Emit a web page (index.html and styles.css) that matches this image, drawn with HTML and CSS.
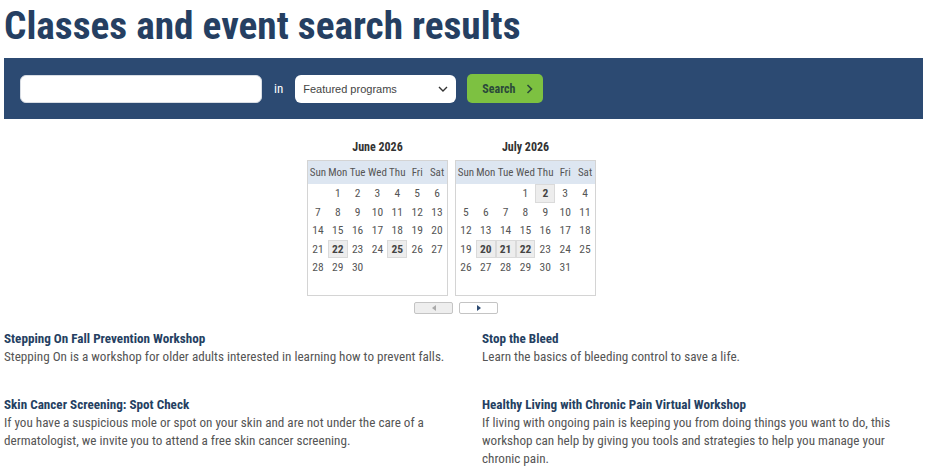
FILE: index.html
```html
<!DOCTYPE html>
<html lang="en">
<head>
  <meta charset="UTF-8">
  <meta name="viewport" content="width=device-width, initial-scale=1.0">
  <title>Classes and event search results</title>
  <link rel="stylesheet" href="styles.css">
</head>
<body>
  <div class="page">
    <h1>Classes and event search results</h1>

    <form class="search-bar" onsubmit="return false;">
      <input class="search-input" type="text" aria-label="Search text">
      <span class="search-in">in</span>
      <div class="select-box">
        <span>Featured programs</span>
        <svg width="10" height="6" viewBox="0 0 10 6"><path d="M1 1l4 4 4-4" fill="none" stroke="#333" stroke-width="1.4"/></svg>
      </div>
      <button class="search-btn" type="submit">Search
        <svg width="7" height="10" viewBox="0 0 7 10"><path d="M1.5 1l4 4-4 4" fill="none" stroke="#2b4a3a" stroke-width="1.6"/></svg>
      </button>
    </form>

    <div class="calendars">
      <div class="months">
        <div class="cal">
          <div class="cal-title">June 2026</div>
          <div class="cal-box">
            <table>
              <thead>
                <tr><th>Sun</th><th>Mon</th><th>Tue</th><th>Wed</th><th>Thu</th><th>Fri</th><th>Sat</th></tr>
              </thead>
              <tbody>
                <tr><td></td><td>1</td><td>2</td><td>3</td><td>4</td><td>5</td><td>6</td></tr>
                <tr><td>7</td><td>8</td><td>9</td><td>10</td><td>11</td><td>12</td><td>13</td></tr>
                <tr><td>14</td><td>15</td><td>16</td><td>17</td><td>18</td><td>19</td><td>20</td></tr>
                <tr><td>21</td><td class="event">22</td><td>23</td><td>24</td><td class="event">25</td><td>26</td><td>27</td></tr>
                <tr><td>28</td><td>29</td><td>30</td><td></td><td></td><td></td><td></td></tr>
                <tr><td></td><td></td><td></td><td></td><td></td><td></td><td></td></tr>
              </tbody>
            </table>
          </div>
        </div>
        <div class="cal">
          <div class="cal-title">July 2026</div>
          <div class="cal-box">
            <table>
              <thead>
                <tr><th>Sun</th><th>Mon</th><th>Tue</th><th>Wed</th><th>Thu</th><th>Fri</th><th>Sat</th></tr>
              </thead>
              <tbody>
                <tr><td></td><td></td><td></td><td>1</td><td class="event">2</td><td>3</td><td>4</td></tr>
                <tr><td>5</td><td>6</td><td>7</td><td>8</td><td>9</td><td>10</td><td>11</td></tr>
                <tr><td>12</td><td>13</td><td>14</td><td>15</td><td>16</td><td>17</td><td>18</td></tr>
                <tr><td>19</td><td class="event">20</td><td class="event">21</td><td class="event">22</td><td>23</td><td>24</td><td>25</td></tr>
                <tr><td>26</td><td>27</td><td>28</td><td>29</td><td>30</td><td>31</td><td></td></tr>
                <tr><td></td><td></td><td></td><td></td><td></td><td></td><td></td></tr>
              </tbody>
            </table>
          </div>
        </div>
      </div>
      <div class="cal-nav">
        <button class="nav-btn disabled" type="button" aria-label="Previous month">
          <svg width="4" height="6" viewBox="0 0 4 6"><path d="M4 0v6L0 3z" fill="#aaa"/></svg>
        </button>
        <button class="nav-btn" type="button" aria-label="Next month">
          <svg width="4" height="6" viewBox="0 0 4 6"><path d="M0 0v6l4-3z" fill="#2c4a72"/></svg>
        </button>
      </div>
    </div>

    <div class="results">
      <div class="result">
        <a class="result-title" href="#">Stepping On Fall Prevention Workshop</a>
        <p>Stepping On is a workshop for older adults interested in learning how to prevent falls.</p>
      </div>
      <div class="result">
        <a class="result-title" href="#">Stop the Bleed</a>
        <p>Learn the basics of bleeding control to save a life.</p>
      </div>
      <div class="result">
        <a class="result-title" href="#">Skin Cancer Screening: Spot Check</a>
        <p>If you have a suspicious mole or spot on your skin and are not under the care of a dermatologist, we invite you to attend a free skin cancer screening.</p>
      </div>
      <div class="result">
        <a class="result-title" href="#">Healthy Living with Chronic Pain Virtual Workshop</a>
        <p>If living with ongoing pain is keeping you from doing things you want to do, this workshop can help by giving you tools and strategies to help you manage your chronic pain.</p>
      </div>
    </div>
  </div>
</body>
</html>
```

FILE: styles.css
```css
body {
  margin: 0;
  background: #fff;
  font-family: "Roboto Condensed", "Roboto", "Liberation Sans", sans-serif;
  color: #555;
}

.page {
  width: 919px;
  margin-left: 4px;
}

h1 {
  margin: 0;
  padding-top: 4px;
  height: 54px;
  font-size: 39.3px;
  line-height: 44px;
  font-weight: 700;
  color: #253f62;
}

.search-bar {
  display: flex;
  align-items: center;
  height: 61px;
  padding: 0 16px;
  background: #2c4a72;
}

.search-input {
  width: 242px;
  height: 28px;
  box-sizing: border-box;
  border: 1px solid #d8dde4;
  border-radius: 6px;
  background: #fff;
  margin: 0;
}

.search-in {
  margin: 0 12px 0 12px;
  color: #fff;
  font-size: 13px;
}

.select-box {
  display: flex;
  align-items: center;
  justify-content: space-between;
  width: 161px;
  height: 28px;
  box-sizing: border-box;
  padding: 0 8px 0 8px;
  border-radius: 6px;
  background: #fff;
  font-family: "Liberation Sans", Arial, sans-serif;
  font-size: 11px;
  color: #444;
}

.search-btn {
  display: flex;
  align-items: center;
  gap: 11px;
  margin-left: 11px;
  width: 76px;
  height: 29px;
  padding: 0 0 0 15px;
  border: 0;
  border-radius: 5px;
  background: #7dc141;
  font-family: inherit;
  font-size: 12px;
  font-weight: 700;
  color: #2b4a3a;
}

.calendars {
  margin: 20px 0 0 303px;
}

.months {
  display: flex;
  gap: 7px;
}

.cal-title {
  height: 21px;
  text-align: center;
  font-size: 12px;
  font-weight: 700;
  line-height: 16px;
  color: #333;
}

.cal-box {
  width: 139px;
  height: 134px;
  border: 1px solid #d4d4d4;
}

.cal table {
  border-collapse: collapse;
  table-layout: fixed;
  width: 139px;
}

.cal th {
  height: 23px;
  padding: 0;
  background: #dde6f1;
  font-size: 11px;
  font-weight: 400;
  color: #555;
}

.cal td {
  height: 18.5px;
  padding: 0;
  text-align: center;
  font-size: 11.5px;
  color: #555;
}

.cal td.event {
  background: #ededed;
  outline: 1px solid #dadada;
  outline-offset: -1px;
  font-weight: 700;
  color: #444;
}

.cal-nav {
  display: flex;
  gap: 6px;
  margin: 6px 0 0 107px;
}

.nav-btn {
  display: flex;
  align-items: center;
  justify-content: center;
  width: 39px;
  height: 12px;
  padding: 0;
  border: 1px solid #c4c4c4;
  border-radius: 2px;
  background: #fff;
}

.nav-btn.disabled {
  background: #eee;
}

.results {
  display: grid;
  grid-template-columns: 478px 420px;
  row-gap: 30px;
  margin-top: 16px;
  font-size: 13.15px;
  line-height: 18px;
}

.result-title {
  display: block;
  font-weight: 700;
  color: #253f62;
  text-decoration: none;
}

.result p {
  margin: 0;
  color: #555;
}
```
